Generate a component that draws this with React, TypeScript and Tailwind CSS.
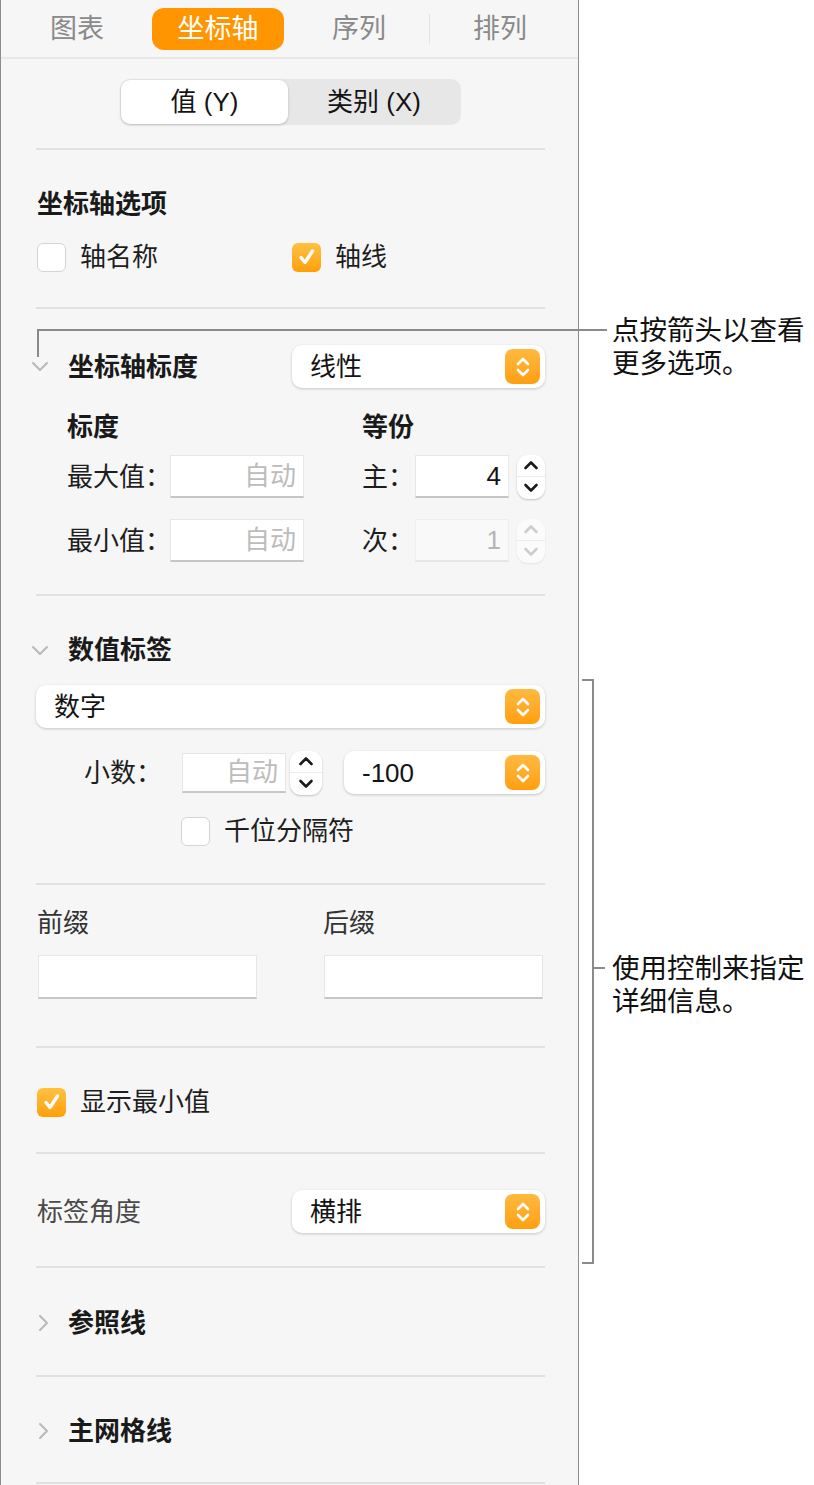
import React from "react";

const F = "font-['Liberation_Sans','Noto_Sans_CJK_SC',sans-serif]";

function Divider() {
  return <div className="h-[2px] w-[509px] bg-[#e1e1e1]" />;
}

function OrangeUpDown() {
  return (
    <div className="w-[35px] h-[35px] rounded-[8px] bg-linear-to-b from-[#ffb93e] to-[#ff9f0a] flex items-center justify-center shadow-[0_0_1px_rgba(0,0,0,0.15)]">
      <svg width="16" height="26" viewBox="0 0 16 26" fill="none" stroke="white" strokeWidth="2.6" strokeLinecap="round" strokeLinejoin="round">
        <path d="M3 10 L8 5 L13 10" />
        <path d="M3 16 L8 21 L13 16" />
      </svg>
    </div>
  );
}

function Popup({ label, w }: { label: string; w: string }) {
  return (
    <div className={`${w} h-[43px] bg-white rounded-[10px] shadow-[0_1px_3px_rgba(0,0,0,0.2)] flex items-center justify-between pl-[18px] pr-[5px]`}>
      <span className="text-[26px] leading-none text-[#141414] whitespace-nowrap">{label}</span>
      <OrangeUpDown />
    </div>
  );
}

function Field({ text, w, h, disabled, muted }: { text?: string; w: string; h: string; disabled?: boolean; muted?: boolean }) {
  return (
    <div
      className={`${w} ${h} ${disabled ? "bg-[#f9f9f9] border-[#eeeeee] border-b-[#e6e6e6]" : "bg-white border-[#e6e6e6] border-b-[#c6c6c6]"} border border-b-[2px] flex items-center justify-end pr-[7px]`}
    >
      <span className={`text-[26px] leading-none ${muted ? "text-[#bcbcbc]" : disabled ? "text-[#b5b5b5]" : "text-[#141414]"}`}>{text}</span>
    </div>
  );
}

function Stepper({ disabled, w }: { disabled?: boolean; w: string }) {
  const c = disabled ? "#cdcdcd" : "#1a1a1a";
  return (
    <div className={`${w} h-[44px] rounded-[11px] ${disabled ? "bg-[#fbfbfb] shadow-[0_1px_2px_rgba(0,0,0,0.08)]" : "bg-white shadow-[0_1px_2px_rgba(0,0,0,0.22)]"} flex flex-col`}>
      <div className="flex-1 flex items-center justify-center border-b border-[#ececec]">
        <svg width="16" height="10" viewBox="0 0 16 10" fill="none" stroke={c} strokeWidth="2.6" strokeLinecap="round" strokeLinejoin="round">
          <path d="M2.5 8 L8 2.5 L13.5 8" />
        </svg>
      </div>
      <div className="flex-1 flex items-center justify-center">
        <svg width="16" height="10" viewBox="0 0 16 10" fill="none" stroke={c} strokeWidth="2.6" strokeLinecap="round" strokeLinejoin="round">
          <path d="M2.5 2 L8 7.5 L13.5 2" />
        </svg>
      </div>
    </div>
  );
}

function Checkbox({ checked }: { checked?: boolean }) {
  return checked ? (
    <div className="w-[29px] h-[29px] rounded-[6px] bg-linear-to-b from-[#ffc13e] to-[#ffa000] flex items-center justify-center">
      <svg width="22" height="22" viewBox="0 0 22 22" fill="none" stroke="white" strokeWidth="3.4" strokeLinecap="round" strokeLinejoin="round">
        <path d="M5 11.5 L9 16.5 L16.5 5" />
      </svg>
    </div>
  ) : (
    <div className="w-[29px] h-[29px] rounded-[6px] bg-white border border-[#d4d4d4]" />
  );
}

function ChevDown() {
  return (
    <svg width="18" height="11" viewBox="0 0 18 11" fill="none" stroke="#b9b9b9" strokeWidth="2" strokeLinecap="round" strokeLinejoin="round">
      <path d="M2 2 L9 9 L16 2" />
    </svg>
  );
}

function ChevRight() {
  return (
    <svg width="11" height="18" viewBox="0 0 11 18" fill="none" stroke="#b9b9b9" strokeWidth="2" strokeLinecap="round" strokeLinejoin="round">
      <path d="M2 2 L9 9 L2 16" />
    </svg>
  );
}

function Tab({ label, active }: { label: string; active?: boolean }) {
  return (
    <div
      className={`w-[132px] h-[42px] rounded-[12px] flex items-center justify-center text-[27px] leading-none pt-[2px] ${
        active ? "bg-[#ff9500] text-white" : "text-[#8a8a8a]"
      }`}
    >
      {label}
    </div>
  );
}

export default function App() {
  return (
    <div className={`relative w-[814px] min-h-[1485px] bg-white flex ${F}`}>
      <div className="w-[579px] bg-[#f6f6f6] border-l border-r border-b border-[#8c8c8c] flex flex-col">
        {/* tab bar */}
        <div className="h-[57px] flex items-center pl-[10px]">
          <Tab label="图表" />
          <div className="w-[9px]" />
          <Tab label="坐标轴" active />
          <div className="w-[9px]" />
          <Tab label="序列" />
          <div className="w-[4px]" />
          <div className="w-[1px] h-[30px] bg-[#e4e4e4]" />
          <div className="w-[4px]" />
          <Tab label="排列" />
        </div>
        <div className="h-[2px] bg-[#e8e8e8]" />

        <div className="pl-[35px] pr-[33px] flex flex-col">
          {/* segmented */}
          <div className="pt-[20px] pb-[23px]">
            <div className="ml-[84px] w-[341px] h-[46px] rounded-[10px] bg-[#e7e7e7] flex p-[1px]">
              <div className="w-[167px] h-full rounded-[9px] bg-white shadow-[0_1px_3px_rgba(0,0,0,0.2)] flex items-center justify-center text-[26px] leading-none text-[#141414]">
                值 (Y)
              </div>
              <div className="flex-1 flex items-center justify-center text-[26px] leading-none text-[#141414]">类别 (X)</div>
            </div>
          </div>
          <Divider />

          {/* 坐标轴选项 */}
          <div className="pt-[38px] pb-[35px] flex flex-col">
            <div className="h-[32px] flex items-center ml-[1px] text-[26px] font-bold text-[#1a1a1a]">坐标轴选项</div>
            <div className="mt-[22px] h-[30px] flex items-center ml-[1px]">
              <div className="w-[255px] flex items-center gap-[14px]">
                <Checkbox />
                <span className="text-[26px] leading-none text-[#1e1e1e]">轴名称</span>
              </div>
              <div className="flex items-center gap-[14px]">
                <Checkbox checked />
                <span className="text-[26px] leading-none text-[#1e1e1e]">轴线</span>
              </div>
            </div>
          </div>
          <Divider />

          {/* 坐标轴标度 */}
          <div className="pt-[36px] pb-[32px] flex flex-col">
            <div className="h-[43px] flex items-center -ml-[5px]">
              <div className="w-[37px] flex items-center">
                <ChevDown />
              </div>
              <span className="text-[26px] font-bold leading-none text-[#1a1a1a]">坐标轴标度</span>
              <div className="ml-auto">
                <Popup label="线性" w="w-[253px]" />
              </div>
            </div>
            <div className="mt-[23px] h-[32px] flex items-center pl-[31px] text-[26px] font-bold text-[#1a1a1a]">
              <div className="w-[295px]">标度</div>
              <div>等份</div>
            </div>
            <div className="mt-[12px] h-[43px] flex items-center pl-[31px]">
              <div className="w-[103px] shrink-0 whitespace-nowrap text-[26px] leading-none text-[#1e1e1e]">最大值：</div>
              <Field text="自动" muted w="w-[134px]" h="h-[43px]" />
              <div className="w-[58px]" />
              <div className="w-[53px] shrink-0 whitespace-nowrap text-[26px] leading-none text-[#1e1e1e]">主：</div>
              <Field text="4" w="w-[94px]" h="h-[43px]" />
              <div className="w-[8px]" />
              <Stepper w="w-[28px]" />
            </div>
            <div className="mt-[21px] h-[43px] flex items-center pl-[31px]">
              <div className="w-[103px] shrink-0 whitespace-nowrap text-[26px] leading-none text-[#1e1e1e]">最小值：</div>
              <Field text="自动" muted w="w-[134px]" h="h-[43px]" />
              <div className="w-[58px]" />
              <div className="w-[53px] shrink-0 whitespace-nowrap text-[26px] leading-none text-[#1e1e1e]">次：</div>
              <Field text="1" disabled w="w-[94px]" h="h-[43px]" />
              <div className="w-[8px]" />
              <Stepper disabled w="w-[28px]" />
            </div>
          </div>
          <Divider />

          {/* 数值标签 */}
          <div className="pt-[38px] pb-[37px] flex flex-col">
            <div className="h-[32px] flex items-center -ml-[5px]">
              <div className="w-[37px] flex items-center">
                <ChevDown />
              </div>
              <span className="text-[26px] font-bold leading-none text-[#1a1a1a]">数值标签</span>
            </div>
            <div className="mt-[19px]">
              <Popup label="数字" w="w-[509px]" />
            </div>
            <div className="mt-[23px] h-[43px] flex items-center pl-[48px]">
              <div className="w-[98px] shrink-0 whitespace-nowrap text-[26px] leading-none text-[#1e1e1e]">小数：</div>
              <Field text="自动" muted w="w-[104px]" h="h-[40px]" />
              <div className="w-[4px]" />
              <Stepper w="w-[32px]" />
              <div className="w-[22px]" />
              <Popup label="-100" w="w-[201px]" />
            </div>
            <div className="mt-[22px] h-[30px] flex items-center pl-[145px] gap-[14px]">
              <Checkbox />
              <span className="text-[26px] leading-none text-[#1e1e1e]">千位分隔符</span>
            </div>
          </div>
          <Divider />

          {/* 前缀 后缀 */}
          <div className="pt-[22px] pb-[47px] flex flex-col">
            <div className="h-[32px] flex items-center pl-[1px] text-[26px] text-[#333333]">
              <div className="w-[286px]">前缀</div>
              <div>后缀</div>
            </div>
            <div className="mt-[16px] h-[44px] flex items-center pl-[2px]">
              <Field w="w-[219px]" h="h-[44px]" />
              <div className="w-[67px]" />
              <Field w="w-[219px]" h="h-[44px]" />
            </div>
          </div>
          <Divider />

          {/* 显示最小值 */}
          <div className="pt-[39px] pb-[35px]">
            <div className="h-[30px] flex items-center ml-[1px] gap-[14px]">
              <Checkbox checked />
              <span className="text-[26px] leading-none text-[#1e1e1e]">显示最小值</span>
            </div>
          </div>
          <Divider />

          {/* 标签角度 */}
          <div className="pt-[36px] pb-[33px]">
            <div className="h-[43px] flex items-center ml-[1px]">
              <span className="text-[26px] leading-none text-[#4a4a4a]">标签角度</span>
              <div className="ml-auto">
                <Popup label="横排" w="w-[253px]" />
              </div>
            </div>
          </div>
          <Divider />

          {/* 参照线 */}
          <div className="pt-[39px] pb-[36px]">
            <div className="h-[32px] flex items-center">
              <div className="w-[32px] pl-[2px] flex items-center">
                <ChevRight />
              </div>
              <span className="text-[26px] font-bold leading-none text-[#1a1a1a]">参照线</span>
            </div>
          </div>
          <Divider />

          {/* 主网格线 */}
          <div className="pt-[38px] pb-[35px]">
            <div className="h-[32px] flex items-center">
              <div className="w-[32px] pl-[2px] flex items-center">
                <ChevRight />
              </div>
              <span className="text-[26px] font-bold leading-none text-[#1a1a1a]">主网格线</span>
            </div>
          </div>
          <Divider />
          <div className="h-[1px]" />
        </div>
      </div>

      {/* annotations */}
      <div className="absolute left-[37px] top-[329px] w-[570px] h-[2px] bg-[#8a8a8a]" />
      <div className="absolute left-[37px] top-[329px] w-[2px] h-[28px] bg-[#8a8a8a]" />
      <div className="absolute left-[612px] top-[314px] text-[27.5px] leading-[33px] text-[#111111] whitespace-nowrap">
        <div>点按箭头以查看</div>
        <div>更多选项。</div>
      </div>

      <div className="absolute left-[592px] top-[679px] w-[2px] h-[585px] bg-[#8a8a8a]" />
      <div className="absolute left-[582px] top-[679px] w-[12px] h-[2px] bg-[#8a8a8a]" />
      <div className="absolute left-[582px] top-[1262px] w-[12px] h-[2px] bg-[#8a8a8a]" />
      <div className="absolute left-[592px] top-[967px] w-[13px] h-[2px] bg-[#8a8a8a]" />
      <div className="absolute left-[612px] top-[952px] text-[27.5px] leading-[33px] text-[#111111] whitespace-nowrap">
        <div>使用控制来指定</div>
        <div>详细信息。</div>
      </div>
    </div>
  );
}
